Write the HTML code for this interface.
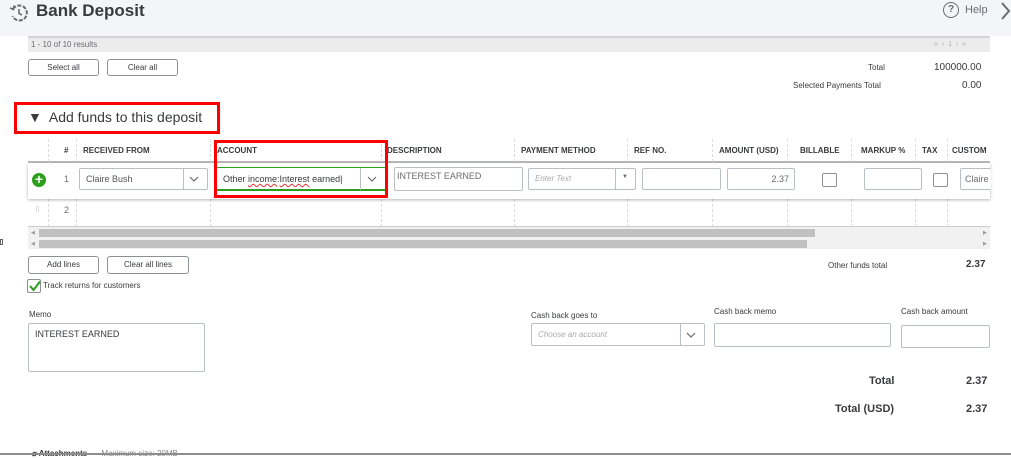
<!DOCTYPE html>
<html><head><style>
*{box-sizing:border-box;margin:0;padding:0}
body{width:1011px;height:455px;background:#fff;font-family:"Liberation Sans",sans-serif;color:#393a3d;position:relative;overflow:hidden}
.a{position:absolute}
.btn{position:absolute;border:1px solid #8d9096;border-radius:3px;background:#fff;font-size:9px;text-align:center;line-height:14px;color:#393a3d}
.th{position:absolute;top:146px;font-size:8px;font-weight:bold;color:#393a3d}
.inp{position:absolute;border:1px solid #babec5;border-radius:2px;background:#fff;font-size:9px;color:#6b6c72}
.vl{position:absolute;top:139px;height:88px;border-left:1px dashed #dcdcdc}
.sm{font-size:8px}
</style></head><body>
<div class="a" style="left:0;top:0;width:1011px;height:36px;background:#f4f5f8"></div>
<svg class="a" style="left:9px;top:3px" width="20" height="20" viewBox="0 0 20 20"><path d="M4 6 A7.5 7.5 0 1 1 3.5 13" fill="none" stroke="#6b6c72" stroke-width="2" stroke-dasharray="4 1.5"/><path d="M1 5 L4.5 6.5 L5 2.5" fill="none" stroke="#6b6c72" stroke-width="1.6"/><path d="M10 6 V10.5 L13 12" fill="none" stroke="#6b6c72" stroke-width="1.6"/></svg>
<div class="a" style="left:36px;top:1px;font-size:17px;font-weight:bold;color:#393a3d">Bank Deposit</div>
<div class="a" style="left:943px;top:2px;width:16px;height:16px;border:1.5px solid #6b6c72;border-radius:50%;font-size:10px;font-weight:bold;text-align:center;line-height:13px;color:#6b6c72">?</div>
<div class="a" style="left:965px;top:4px;font-size:11px;color:#6b6c72">Help</div>
<svg class="a" style="left:1000px;top:2px" width="11" height="18"><path d="M2 1 L9 9 L2 17" fill="none" stroke="#6b6c72" stroke-width="2"/></svg>

<div class="a" style="left:28px;top:36px;width:962px;height:16px;background:#ececec;border-top:2px solid #d4d4d4"></div>
<div class="a sm" style="left:31px;top:40px;color:#6b6c72">1 - 10 of 10 results</div>
<div class="a" style="left:934px;top:41px;font-size:7px;color:#aaa;letter-spacing:1px">« ‹ 1 › »</div>
<div class="btn" style="left:28px;top:59px;width:71px;height:17px;line-height:15px;font-size:8px">Select all</div>
<div class="btn" style="left:107px;top:59px;width:71px;height:17px;line-height:15px;font-size:8px">Clear all</div>
<div class="a sm" style="left:868px;top:63px">Total</div>
<div class="a" style="left:934px;top:62px;font-size:10px">100000.00</div>
<div class="a sm" style="left:793px;top:81px">Selected Payments Total</div>
<div class="a" style="left:962px;top:80px;font-size:10px">0.00</div>

<div class="a" style="left:14px;top:102px;width:206px;height:32px;border:3px solid #f00"></div>
<div class="a" style="left:28px;top:109px;font-size:14px;color:#393a3d">▼&nbsp; Add funds to this deposit</div>

<div class="a" style="left:28px;top:161px;width:962px;height:2px;background:#bbb"></div>
<div class="vl" style="left:48px"></div><div class="vl" style="left:76px"></div><div class="vl" style="left:210px"></div><div class="vl" style="left:381px"></div><div class="vl" style="left:514px"></div><div class="vl" style="left:627px"></div><div class="vl" style="left:712px"></div><div class="vl" style="left:787px"></div><div class="vl" style="left:851px"></div><div class="vl" style="left:915px"></div><div class="vl" style="left:947px"></div>
<div class="th" style="left:64px">#</div>
<div class="th" style="left:83px">RECEIVED FROM</div>
<div class="th" style="left:217px">ACCOUNT</div>
<div class="th" style="left:387px">DESCRIPTION</div>
<div class="th" style="left:521px">PAYMENT METHOD</div>
<div class="th" style="left:634px">REF NO.</div>
<div class="th" style="left:719px">AMOUNT (USD)</div>
<div class="th" style="left:800px">BILLABLE</div>
<div class="th" style="left:861px">MARKUP %</div>
<div class="th" style="left:922px">TAX</div>
<div class="th" style="left:952px">CUSTOM</div>

<div class="a" style="left:28px;top:163px;width:962px;height:36px;background:#fff;box-shadow:0 1px 3px rgba(0,0,0,.3)"></div>
<div class="a" style="left:32px;top:173px;width:14px;height:14px;border-radius:50%;background:#2ca01c;color:#fff;font-size:14px;font-weight:bold;line-height:13px;text-align:center">+</div>
<div class="a" style="left:64px;top:174px;font-size:9px;color:#6b6c72">1</div>
<div class="inp" style="left:79px;top:168px;width:129px;height:22px"><span style="position:absolute;left:6px;top:5px;color:#555">Claire Bush</span><span style="position:absolute;left:103px;top:0;width:1px;height:20px;background:#babec5"></span><svg style="position:absolute;left:109px;top:7px" width="10" height="7"><path d="M1 1 L5 5 L9 1" fill="none" stroke="#6b6c72" stroke-width="1.2"/></svg></div>
<div class="inp" style="left:216px;top:167px;width:170px;height:24px;border-bottom:2px solid #2ca01c;border-top-color:#2ca01c"><span style="position:absolute;left:6px;top:6px;color:#393a3d">Other <span style="text-decoration:underline wavy #e33">income</span>:<span style="text-decoration:underline wavy #e33">Interest</span> earned|</span><span style="position:absolute;left:143px;top:0;width:1px;height:22px;background:#babec5"></span><svg style="position:absolute;left:150px;top:8px" width="10" height="7"><path d="M1 1 L5 5 L9 1" fill="none" stroke="#6b6c72" stroke-width="1.2"/></svg></div>
<div class="a" style="left:214px;top:140px;width:174px;height:58px;border:3px solid #f00"></div>
<div class="inp" style="left:394px;top:167px;width:129px;height:24px"><span style="position:absolute;left:2px;top:3px">INTEREST EARNED</span></div>
<div class="inp" style="left:528px;top:168px;width:108px;height:22px"><span style="position:absolute;left:6px;top:5px;font-style:italic;color:#aaa;font-size:8px">Enter Text</span><span style="position:absolute;left:86px;top:0;width:1px;height:20px;background:#babec5"></span><span style="position:absolute;left:93px;top:5px;font-size:6px">▼</span></div>
<div class="inp" style="left:642px;top:168px;width:79px;height:22px"></div>
<div class="inp" style="left:727px;top:168px;width:68px;height:22px"><span style="position:absolute;right:5px;top:5px">2.37</span></div>
<div class="inp" style="left:822px;top:173px;width:15px;height:14px;border-color:#8d9096"></div>
<div class="inp" style="left:864px;top:168px;width:58px;height:22px"></div>
<div class="inp" style="left:933px;top:173px;width:15px;height:14px;border-color:#8d9096"></div>
<div class="inp" style="left:960px;top:168px;width:31px;height:22px;border-right:none"><span style="position:absolute;left:4px;top:5px">Claire</span></div>

<div class="a" style="left:35px;top:206px;font-size:7px;color:#bbb">⠿</div>
<div class="a" style="left:64px;top:205px;font-size:9px;color:#6b6c72">2</div>
<div class="a" style="left:28px;top:226px;width:962px;height:1px;background:#ccc"></div>

<div class="a" style="left:28px;top:227px;width:962px;height:22px;background:#f1f1f1"></div>
<div class="a" style="left:39px;top:229px;width:776px;height:8px;background:#c1c1c1"></div>
<div class="a" style="left:39px;top:240px;width:768px;height:8px;background:#c1c1c1"></div>
<div class="a" style="left:31px;top:230px;font-size:5px;color:#999">◀</div>
<div class="a" style="left:31px;top:241px;font-size:5px;color:#999">◀</div>
<div class="a" style="left:983px;top:230px;font-size:5px;color:#999">▶</div>
<div class="a" style="left:983px;top:241px;font-size:5px;color:#999">▶</div>
<div class="a" style="left:0;top:239px;width:3px;height:6px;border:1px solid #666"></div>

<div class="btn" style="left:28px;top:256px;width:71px;height:18px;line-height:16px;font-size:8px">Add lines</div>
<div class="btn" style="left:107px;top:256px;width:82px;height:18px;line-height:16px;font-size:8px">Clear all lines</div>
<div class="a sm" style="left:828px;top:261px">Other funds total</div>
<div class="a" style="left:966px;top:259px;font-size:10px;font-weight:bold">2.37</div>
<div class="a" style="left:27px;top:279px;width:14px;height:14px;border:1px solid #8d9096;border-radius:2px"></div>
<svg class="a" style="left:29px;top:280px" width="12" height="12"><path d="M1 6 L4.5 10 L11 1.5" fill="none" stroke="#2ca01c" stroke-width="2"/></svg>
<div class="a sm" style="left:43px;top:281px">Track returns for customers</div>

<div class="a sm" style="left:29px;top:310px">Memo</div>
<div class="inp" style="left:28px;top:323px;width:177px;height:49px"><span style="position:absolute;left:6px;top:5px;color:#393a3d">INTEREST EARNED</span></div>
<div class="a sm" style="left:531px;top:311px">Cash back goes to</div>
<div class="inp" style="left:531px;top:323px;width:174px;height:23px"><span style="position:absolute;left:6px;top:6px;font-style:italic;color:#aaa;font-size:8px">Choose an account</span><span style="position:absolute;left:148px;top:0;width:1px;height:21px;background:#babec5"></span><svg style="position:absolute;left:154px;top:8px" width="10" height="7"><path d="M1 1 L5 5 L9 1" fill="none" stroke="#6b6c72" stroke-width="1.2"/></svg></div>
<div class="a sm" style="left:714px;top:307px">Cash back memo</div>
<div class="inp" style="left:714px;top:323px;width:177px;height:24px"></div>
<div class="a sm" style="left:901px;top:307px">Cash back amount</div>
<div class="inp" style="left:901px;top:325px;width:89px;height:23px"></div>

<div class="a" style="left:869px;top:375px;font-size:11px;font-weight:bold">Total</div>
<div class="a" style="left:966px;top:375px;font-size:11px;font-weight:bold">2.37</div>
<div class="a" style="left:835px;top:403px;font-size:11px;font-weight:bold">Total (USD)</div>
<div class="a" style="left:966px;top:403px;font-size:11px;font-weight:bold">2.37</div>

<div class="a sm" style="left:32px;top:449px;font-weight:bold">⌀ Attachments <span style="font-weight:normal;color:#888;margin-left:12px">Maximum size: 20MB</span></div>
<div class="a" style="left:0;top:453px;width:1011px;height:2px;background:#8d8d8d"></div>
</body></html>
